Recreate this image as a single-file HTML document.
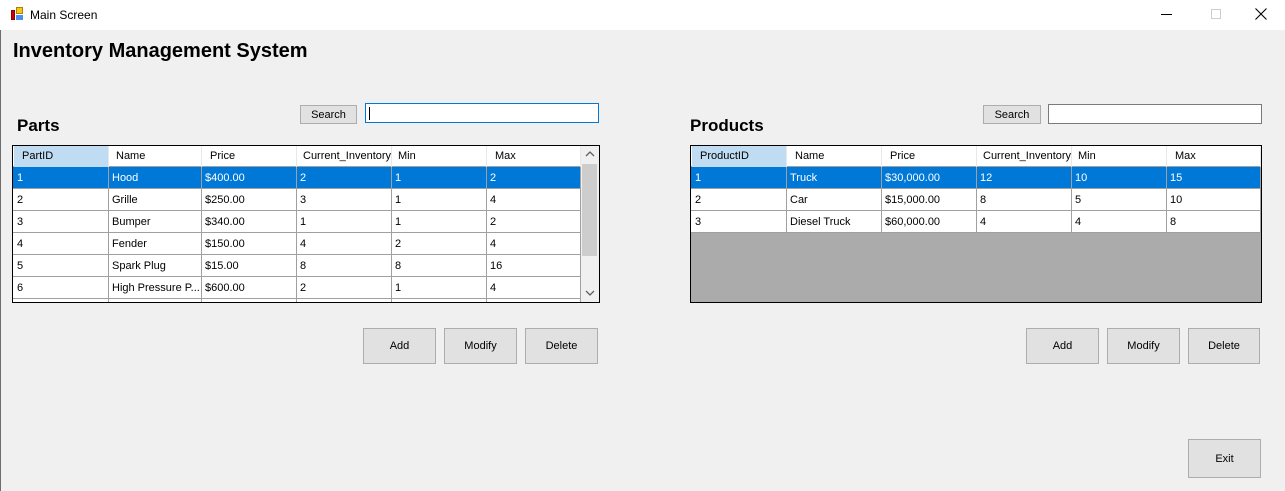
<!DOCTYPE html>
<html><head><meta charset="utf-8"><style>
*{margin:0;padding:0;box-sizing:border-box}
body{width:1285px;height:491px;background:#f0f0f0;font-family:"Liberation Sans",sans-serif;font-size:11px;color:#000;position:relative;overflow:hidden}
.a{position:absolute}
.btn{position:absolute;background:#e1e1e1;border:1px solid #adadad;display:flex;align-items:center;justify-content:center;font-size:11px}
.grid{position:absolute;border:1px solid #000;background:#fff;overflow:hidden}
.row{position:absolute;left:0;height:22px;border-bottom:1px solid #a0a0a0;width:100%}
.c{position:absolute;top:0;height:22px;border-right:1px solid #a0a0a0;padding:5px 0 0 3px;white-space:nowrap;overflow:hidden}
.h .c{padding-top:4px;padding-left:8px;border-right:1px solid #e8e8e8}
.sel{background:#0078d7;color:#fff}
.tb{position:absolute;background:#fff;border:1px solid #7a7a7a}
</style></head><body>
<div class="a" style="left:0;top:0;width:1285px;height:30px;background:#fff"></div>
<div class="a" style="left:0;top:30px;width:1px;height:461px;background:#6d6d6d"></div>
<div class="a" style="left:11px;top:10px;width:4px;height:10px;background:#c00;border:1px solid #800"></div>
<div class="a" style="left:16px;top:7px;width:7px;height:7px;background:#f5c518;border:1px solid #b08000"></div>
<div class="a" style="left:16px;top:15px;width:7px;height:5px;background:#4a8ff0"></div>
<div class="a" style="left:30px;top:8px;font-size:12px">Main Screen</div>
<div class="a" style="left:1161px;top:14px;width:11px;height:1px;background:#000"></div>
<div class="a" style="left:1211px;top:9px;width:10px;height:10px;border:1px solid #ccc"></div>
<svg class="a" style="left:1255px;top:8px" width="12" height="12"><path d="M0.5 0.5L11.5 11.5M11.5 0.5L0.5 11.5" stroke="#000" stroke-width="1.1"/></svg>
<div class="a" style="left:13px;top:40px;font-size:20px;font-weight:bold">Inventory Management System</div>
<div class="a" style="left:17px;top:116px;font-size:17px;font-weight:bold">Parts</div>
<div class="a" style="left:690px;top:116px;font-size:17px;font-weight:bold">Products</div>
<div class="btn" style="left:300px;top:105px;width:57px;height:19px">Search</div>
<div class="tb" style="left:365px;top:103px;width:234px;height:20px;border-color:#0078d7"><div class="a" style="left:3px;top:3px;width:1px;height:13px;background:#000"></div></div>
<div class="btn" style="left:983px;top:105px;width:58px;height:19px">Search</div>
<div class="tb" style="left:1048px;top:104px;width:214px;height:20px"></div>

<div class="grid" style="left:12px;top:145px;width:588px;height:158px">
 <div class="row h" style="top:0;height:21px;border-bottom:1px solid #a0a0a0">
  <div class="c" style="left:1px;width:95px;background:#bfdcf3">PartID</div><div class="c" style="left:96px;width:93px;padding-left:7px">Name</div><div class="c" style="left:189px;width:95px">Price</div><div class="c" style="left:284px;width:95px;padding-left:6px">Current_Inventory</div><div class="c" style="left:379px;width:95px;padding-left:6px">Min</div><div class="c" style="left:474px;width:94px">Max</div>
 </div>
 <div class="row sel" style="top:21px"><div class="c" style="left:1px;width:95px">1</div><div class="c" style="left:96px;width:93px">Hood</div><div class="c" style="left:189px;width:95px">$400.00</div><div class="c" style="left:284px;width:95px">2</div><div class="c" style="left:379px;width:95px">1</div><div class="c" style="left:474px;width:94px">2</div></div>
 <div class="row" style="top:43px"><div class="c" style="left:1px;width:95px">2</div><div class="c" style="left:96px;width:93px">Grille</div><div class="c" style="left:189px;width:95px">$250.00</div><div class="c" style="left:284px;width:95px">3</div><div class="c" style="left:379px;width:95px">1</div><div class="c" style="left:474px;width:94px">4</div></div>
 <div class="row" style="top:65px"><div class="c" style="left:1px;width:95px">3</div><div class="c" style="left:96px;width:93px">Bumper</div><div class="c" style="left:189px;width:95px">$340.00</div><div class="c" style="left:284px;width:95px">1</div><div class="c" style="left:379px;width:95px">1</div><div class="c" style="left:474px;width:94px">2</div></div>
 <div class="row" style="top:87px"><div class="c" style="left:1px;width:95px">4</div><div class="c" style="left:96px;width:93px">Fender</div><div class="c" style="left:189px;width:95px">$150.00</div><div class="c" style="left:284px;width:95px">4</div><div class="c" style="left:379px;width:95px">2</div><div class="c" style="left:474px;width:94px">4</div></div>
 <div class="row" style="top:109px"><div class="c" style="left:1px;width:95px">5</div><div class="c" style="left:96px;width:93px">Spark Plug</div><div class="c" style="left:189px;width:95px">$15.00</div><div class="c" style="left:284px;width:95px">8</div><div class="c" style="left:379px;width:95px">8</div><div class="c" style="left:474px;width:94px">16</div></div>
 <div class="row" style="top:131px"><div class="c" style="left:1px;width:95px">6</div><div class="c" style="left:96px;width:93px">High Pressure P...</div><div class="c" style="left:189px;width:95px">$600.00</div><div class="c" style="left:284px;width:95px">2</div><div class="c" style="left:379px;width:95px">1</div><div class="c" style="left:474px;width:94px">4</div></div>
 <div class="row" style="top:153px"><div class="c" style="left:1px;width:95px"></div><div class="c" style="left:96px;width:93px"></div><div class="c" style="left:189px;width:95px"></div><div class="c" style="left:284px;width:95px"></div><div class="c" style="left:379px;width:95px"></div><div class="c" style="left:474px;width:94px"></div></div>
 <div class="a" style="left:568px;top:0;width:18px;height:156px;background:#f0f0f0">
  <svg class="a" style="left:4px;top:5px" width="10" height="6"><path d="M1 5L5 1L9 5" stroke="#606060" stroke-width="1.3" fill="none"/></svg>
  <div class="a" style="left:1px;top:18px;width:15px;height:92px;background:#cdcdcd"></div>
  <svg class="a" style="left:4px;top:144px" width="10" height="6"><path d="M1 1L5 5L9 1" stroke="#606060" stroke-width="1.3" fill="none"/></svg>
 </div>
</div>

<div class="grid" style="left:690px;top:145px;width:572px;height:158px;background:#ababab">
 <div class="row h" style="top:0;height:21px;background:#fff">
  <div class="c" style="left:1px;width:95px;background:#bfdcf3">ProductID</div><div class="c" style="left:96px;width:95px">Name</div><div class="c" style="left:191px;width:95px">Price</div><div class="c" style="left:286px;width:95px;padding-left:6px">Current_Inventory</div><div class="c" style="left:381px;width:95px;padding-left:6px">Min</div><div class="c" style="left:476px;width:94px">Max</div>
 </div>
 <div class="row sel" style="top:21px"><div class="c" style="left:1px;width:95px">1</div><div class="c" style="left:96px;width:95px">Truck</div><div class="c" style="left:191px;width:95px">$30,000.00</div><div class="c" style="left:286px;width:95px">12</div><div class="c" style="left:381px;width:95px">10</div><div class="c" style="left:476px;width:94px">15</div></div>
 <div class="row" style="top:43px;background:#fff"><div class="c" style="left:1px;width:95px">2</div><div class="c" style="left:96px;width:95px">Car</div><div class="c" style="left:191px;width:95px">$15,000.00</div><div class="c" style="left:286px;width:95px">8</div><div class="c" style="left:381px;width:95px">5</div><div class="c" style="left:476px;width:94px">10</div></div>
 <div class="row" style="top:65px;background:#fff"><div class="c" style="left:1px;width:95px">3</div><div class="c" style="left:96px;width:95px">Diesel Truck</div><div class="c" style="left:191px;width:95px">$60,000.00</div><div class="c" style="left:286px;width:95px">4</div><div class="c" style="left:381px;width:95px">4</div><div class="c" style="left:476px;width:94px">8</div></div>
</div>

<div class="btn" style="left:363px;top:328px;width:73px;height:36px">Add</div>
<div class="btn" style="left:444px;top:328px;width:73px;height:36px">Modify</div>
<div class="btn" style="left:525px;top:328px;width:73px;height:36px">Delete</div>
<div class="btn" style="left:1026px;top:328px;width:73px;height:36px">Add</div>
<div class="btn" style="left:1107px;top:328px;width:73px;height:36px">Modify</div>
<div class="btn" style="left:1188px;top:328px;width:72px;height:36px">Delete</div>
<div class="btn" style="left:1188px;top:439px;width:73px;height:39px">Exit</div>
</body></html>
